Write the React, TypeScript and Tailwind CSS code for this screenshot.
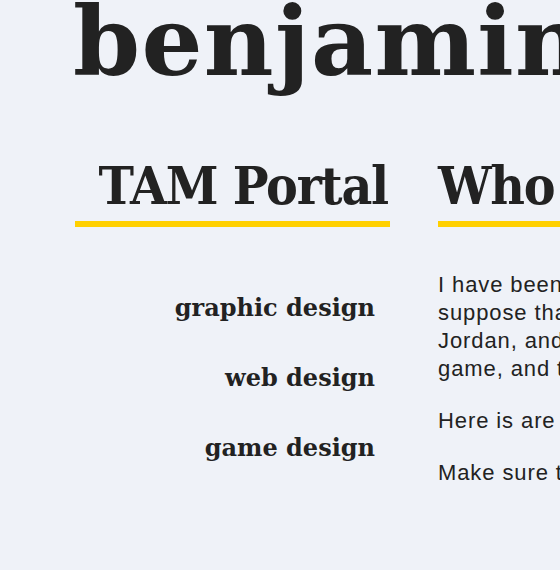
import React from "react";

const slab = { fontFamily: '"DejaVu Serif", serif' };
const sans = { fontFamily: '"Liberation Sans", Arial, sans-serif' };

export default function App() {
  return (
    <div className="w-[560px] h-[570px] overflow-hidden bg-[#eff2f8] text-[#222]">
      <h1
        className="pl-[73px] whitespace-nowrap text-[96px] leading-none font-bold tracking-[1.3px] -mt-[6px]"
        style={slab}
      >
        benjamin hall
      </h1>
      <div className="flex gap-[48px] pl-[75px] mt-[65px]">
        <div className="w-[315px] shrink-0">
          <h2
            className="text-right whitespace-nowrap text-[53px] leading-[60px] font-bold font-stretch-condensed tracking-[-1.2px] border-b-[6px] border-[#ffd000] pb-[6px] pr-[2px]"
            style={slab}
          >
            TAM Portal
          </h2>
          <ul className="text-right pr-[15px] mt-[66px] flex flex-col gap-[40px]" style={slab}>
            <li className="text-[24px] leading-[30px] font-bold">graphic design</li>
            <li className="text-[24px] leading-[30px] font-bold">web design</li>
            <li className="text-[24px] leading-[30px] font-bold">game design</li>
          </ul>
        </div>
        <div className="w-[600px] shrink-0">
          <h2
            className="whitespace-nowrap text-[53px] leading-[60px] font-bold font-stretch-condensed tracking-[-1.2px] border-b-[6px] border-[#ffd000] pb-[6px]"
            style={slab}
          >
            Who am I?
          </h2>
          <div className="mt-[44px] text-[22px] leading-[28px] tracking-[0.9px]" style={sans}>
            <p>
              <span className="block whitespace-nowrap">I have been making things for as long as I can remember. I</span>
              <span className="block whitespace-nowrap">suppose that started with drawing pictures of Michael</span>
              <span className="block whitespace-nowrap">Jordan, and then making my own version of a board</span>
              <span className="block whitespace-nowrap">game, and then building websites.</span>
            </p>
            <p className="mt-[24px] whitespace-nowrap">Here is are some of the things I have made.</p>
            <p className="mt-[24px] whitespace-nowrap">Make sure to check out my portfolio.</p>
          </div>
        </div>
      </div>
    </div>
  );
}
